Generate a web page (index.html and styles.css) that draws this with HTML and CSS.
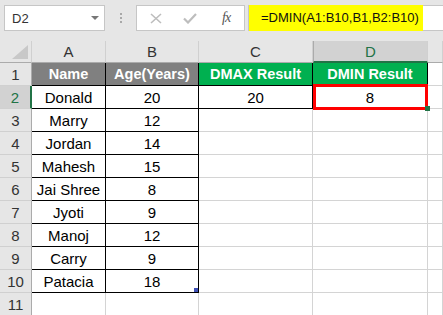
FILE: index.html
```html
<!DOCTYPE html>
<html lang="en">
<head>
    <meta charset="UTF-8">
    <meta name="viewport" content="width=device-width, initial-scale=1.0">
    <title>DMIN</title>
    <link rel="stylesheet" href="styles.css">
</head>
<body>
    <!-- Formula bar -->
    <div class="toolbar">
        <div class="name-box">
            <span>D2</span>
            <span class="caret"></span>
        </div>
        <div class="grip">
            <i></i><i></i><i></i>
        </div>
        <div class="fx-box">
            <svg class="fx-icon" width="12" height="11" viewBox="0 0 12 11">
                <path d="M1 1 L11 10 M11 1 L1 10" stroke="#bdbdbd" stroke-width="1.6" fill="none"/>
            </svg>
            <svg class="fx-icon" width="14" height="11" viewBox="0 0 14 11">
                <path d="M1 5.5 L5 9.5 L13 1" stroke="#bdbdbd" stroke-width="2.2" fill="none"/>
            </svg>
            <span class="fx">fx</span>
        </div>
        <div class="formula">
            <span class="highlight">=DMIN(A1:B10,B1,B2:B10)</span>
        </div>
    </div>

    <!-- Sheet -->
    <div class="sheet">
        <div class="corner">
            <svg width="16" height="14" viewBox="0 0 16 14"><polygon points="16,0 16,14 0,14" fill="#c8c8c8"/></svg>
        </div>
        <div class="ch">A</div>
        <div class="ch">B</div>
        <div class="ch">C</div>
        <div class="ch ch-sel">D</div>
        <div class="ch"></div>

        <div class="rh">1</div>
        <div class="cell t hd-gray">Name</div>
        <div class="cell t hd-gray">Age(Years)</div>
        <div class="cell t hd-green">DMAX Result</div>
        <div class="cell t hd-green">DMIN Result</div>
        <div class="cell"></div>

        <div class="rh rh-sel">2</div>
        <div class="cell t">Donald</div>
        <div class="cell t">20</div>
        <div class="cell t">20</div>
        <div class="cell t active">8</div>
        <div class="cell"></div>

        <div class="rh">3</div>
        <div class="cell t">Marry</div>
        <div class="cell t">12</div>
        <div class="cell"></div>
        <div class="cell"></div>
        <div class="cell"></div>

        <div class="rh">4</div>
        <div class="cell t">Jordan</div>
        <div class="cell t">14</div>
        <div class="cell"></div>
        <div class="cell"></div>
        <div class="cell"></div>

        <div class="rh">5</div>
        <div class="cell t">Mahesh</div>
        <div class="cell t">15</div>
        <div class="cell"></div>
        <div class="cell"></div>
        <div class="cell"></div>

        <div class="rh">6</div>
        <div class="cell t">Jai Shree</div>
        <div class="cell t">8</div>
        <div class="cell"></div>
        <div class="cell"></div>
        <div class="cell"></div>

        <div class="rh">7</div>
        <div class="cell t">Jyoti</div>
        <div class="cell t">9</div>
        <div class="cell"></div>
        <div class="cell"></div>
        <div class="cell"></div>

        <div class="rh">8</div>
        <div class="cell t">Manoj</div>
        <div class="cell t">12</div>
        <div class="cell"></div>
        <div class="cell"></div>
        <div class="cell"></div>

        <div class="rh">9</div>
        <div class="cell t">Carry</div>
        <div class="cell t">9</div>
        <div class="cell"></div>
        <div class="cell"></div>
        <div class="cell"></div>

        <div class="rh">10</div>
        <div class="cell t">Patacia</div>
        <div class="cell t table-end">18</div>
        <div class="cell"></div>
        <div class="cell"></div>
        <div class="cell"></div>

        <div class="rh">11</div>
        <div class="cell"></div>
        <div class="cell"></div>
        <div class="cell"></div>
        <div class="cell"></div>
        <div class="cell"></div>
    </div>
</body>
</html>
```

FILE: styles.css
```css
/* Base */
html, body {
    margin: 0;
    padding: 0;
    height: 315px;
    overflow: hidden;
}

body {
    font-family: "Liberation Sans", Arial, sans-serif;
    background-color: #e6e6e6;
    color: #000;
}

/* Formula bar */
.toolbar {
    display: flex;
    align-items: flex-start;
    height: 41px;
    padding: 5px 0 0 4px;
    box-sizing: border-box;
}

.name-box {
    width: 101px;
    height: 26px;
    box-sizing: border-box;
    border: 1px solid #c6c6c6;
    background-color: #fff;
    display: flex;
    align-items: center;
    justify-content: space-between;
    padding: 0 5px 0 7px;
    font-size: 13px;
    color: #333;
}

.caret {
    width: 0;
    height: 0;
    border-left: 4px solid transparent;
    border-right: 4px solid transparent;
    border-top: 4px solid #777;
}

.grip {
    width: 31px;
    height: 26px;
    display: flex;
    flex-direction: column;
    align-items: center;
    justify-content: center;
    gap: 2px;
}

.grip i {
    width: 2px;
    height: 2px;
    background-color: #a8a8a8;
}

.fx-box {
    width: 109px;
    height: 26px;
    box-sizing: border-box;
    border: 1px solid #c6c6c6;
    background-color: #fff;
    display: flex;
    align-items: center;
    padding-left: 13px;
}

.fx-icon {
    margin-right: 21px;
}

.fx-icon + .fx-icon {
    margin-right: 25px;
}

.fx {
    font-family: "Liberation Serif", serif;
    font-style: italic;
    font-size: 14px;
    color: #555;
    letter-spacing: -1px;
}

.formula {
    flex: 1;
    height: 26px;
    margin-left: 3px;
    box-sizing: border-box;
    border: 1px solid #c6c6c6;
    border-right: none;
    background-color: #fff;
    position: relative;
}

.highlight {
    display: block;
    width: 174px;
    height: 26px;
    margin-top: -1px;
    box-sizing: border-box;
    padding-left: 12px;
    background-color: #ffff00;
    font-size: 13px;
    line-height: 26px;
    color: #111;
}

/* Sheet grid */
.sheet {
    display: grid;
    grid-template-columns: 32px 74px 93px 114px 115px 1fr;
    grid-template-rows: 22px;
    grid-auto-rows: 23px;
}

.sheet > div {
    box-sizing: border-box;
    display: flex;
    align-items: center;
    justify-content: center;
    font-size: 15px;
}

.corner {
    border-right: 1px solid #d0d0d0;
    border-bottom: 1px solid #ababab;
    justify-content: flex-end !important;
    align-items: flex-end !important;
    padding: 0 3px 3px 0;
}

.corner svg {
    display: block;
}

.ch {
    border-right: 1px solid #d0d0d0;
    border-bottom: 1px solid #ababab;
    color: #333;
}

.ch-sel {
    background-color: #d2d2d2;
    color: #217346;
    border-left: 1px solid #ababab;
    border-bottom: 2px solid #217346 !important;
}

.rh {
    border-right: 1px solid #ababab;
    border-bottom: 1px solid #d0d0d0;
    color: #333;
}

.rh-sel {
    background-color: #d2d2d2;
    color: #217346;
    border-right: 2px solid #217346;
}

.cell {
    background-color: #fff;
    border-right: 1px solid #d4d4d4;
    border-bottom: 1px solid #d4d4d4;
}

.cell.t {
    border-color: #000;
}

.hd-gray {
    background-color: #808080;
    color: #fff;
    font-weight: bold;
    font-size: 14.5px !important;
}

.hd-green {
    background-color: #00b050;
    color: #fff;
    font-weight: bold;
    font-size: 14.5px !important;
}

/* Active cell outline */
.active {
    position: relative;
}

.active::after {
    content: "";
    position: absolute;
    left: 0;
    top: -2px;
    right: -1px;
    bottom: -2px;
    border: 3px solid #ff0000;
}

.active::before {
    content: "";
    position: absolute;
    right: -3px;
    bottom: -3px;
    width: 5px;
    height: 5px;
    background-color: #217346;
    z-index: 1;
}

.table-end {
    position: relative;
}

.table-end::after {
    content: "";
    position: absolute;
    right: 0;
    bottom: 0;
    width: 4px;
    height: 4px;
    background-color: #3f51b5;
}
```
